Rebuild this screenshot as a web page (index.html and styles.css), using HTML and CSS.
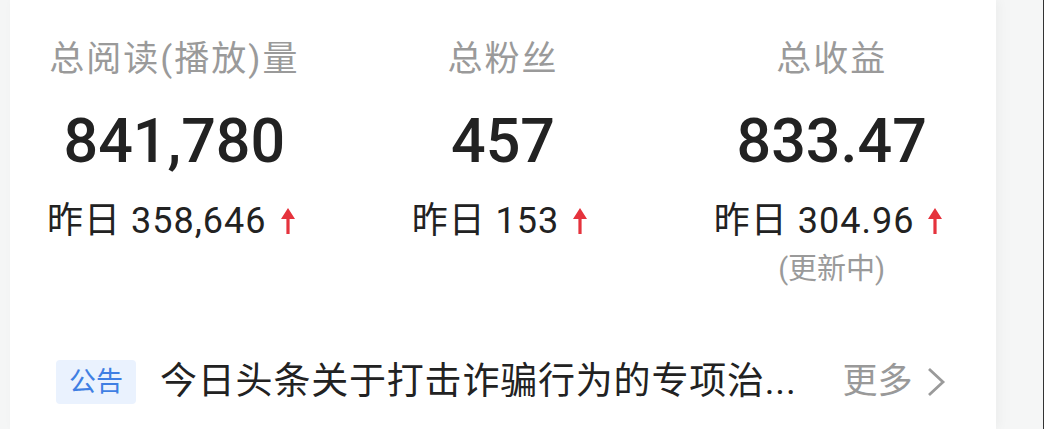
FILE: index.html
```html
<!DOCTYPE html>
<html lang="zh-CN">
<head>
<meta charset="utf-8">
<title>数据概览</title>
<link rel="stylesheet" href="styles.css">
</head>
<body>
<div class="frame">
  <div class="card">
    <div class="stats">
      <div class="stat">
        <div class="label">总阅读(播放)量</div>
        <div class="value">841,780</div>
        <div class="yday">昨日 358,646<svg class="up" viewBox="0 0 14 26"><path d="M7 0 L14 11 L8.6 11 L8.6 26 L5.4 26 L5.4 11 L0 11 Z"/></svg></div>
      </div>
      <div class="stat">
        <div class="label">总粉丝</div>
        <div class="value">457</div>
        <div class="yday">昨日 153<svg class="up" viewBox="0 0 14 26"><path d="M7 0 L14 11 L8.6 11 L8.6 26 L5.4 26 L5.4 11 L0 11 Z"/></svg></div>
      </div>
      <div class="stat">
        <div class="label">总收益</div>
        <div class="value">833.47</div>
        <div class="yday">昨日 304.96<svg class="up" viewBox="0 0 14 26"><path d="M7 0 L14 11 L8.6 11 L8.6 26 L5.4 26 L5.4 11 L0 11 Z"/></svg></div>
        <div class="note">(更新中)</div>
      </div>
    </div>
    <div class="notice">
      <span class="badge">公告</span>
      <span class="notice-text">今日头条关于打击诈骗行为的专项治...</span>
      <span class="more">更多<svg class="chev" viewBox="0 0 20 30"><path d="M3 2 L17 15 L3 28"/></svg></span>
    </div>
  </div>
</div>
</body>
</html>
```

FILE: styles.css
```css
html, body {
  margin: 0;
  padding: 0;
}
body {
  width: 1044px;
  height: 429px;
  overflow: hidden;
  background: #f5f6f6;
  font-family: "Roboto", "Noto Sans CJK SC", sans-serif;
}
.frame {
  height: 429px;
  box-sizing: border-box;
  padding-left: 10px;
  border-right: 1px solid #333;
  display: flex;
}
.card {
  width: 986px;
  height: 429px;
  background: #fff;
  box-shadow: 3px 0 10px rgba(0,0,0,0.04);
  display: flex;
  flex-direction: column;
}
.stats {
  display: grid;
  grid-template-columns: repeat(3, 1fr);
  padding-top: 38px;
}
.stat {
  display: flex;
  flex-direction: column;
  align-items: center;
}
.label {
  font-size: 35px;
  line-height: 44px;
  color: #9a9a9a;
  letter-spacing: 2px;
}
.value {
  margin-top: 24px;
  font-size: 61px;
  line-height: 70px;
  font-weight: 500;
  color: #222;
}
.yday {
  margin-top: 23px;
  font-size: 36px;
  line-height: 44px;
  letter-spacing: 1px;
  color: #222;
  display: flex;
  align-items: center;
}
.up {
  width: 14px;
  height: 26px;
  margin-left: 14px;
  margin-right: 7px;
  fill: #e5333d;
}
.note {
  margin-top: 10px;
  font-size: 29px;
  line-height: 32px;
  color: #9a9a9a;
}
.notice {
  display: flex;
  align-items: center;
  padding-left: 46px;
}
.stats + .notice {
  margin-top: 75px;
}
.badge {
  width: 80px;
  height: 44px;
  border-radius: 4px;
  background: #eaf2fe;
  color: #3f7fe3;
  font-size: 27px;
  line-height: 44px;
  text-align: center;
}
.notice-text {
  margin-left: 24px;
  font-size: 37px;
  line-height: 44px;
  letter-spacing: 0.8px;
  color: #222;
}
.more {
  margin-left: 46px;
  font-size: 35px;
  line-height: 44px;
  color: #999;
  display: flex;
  align-items: center;
}
.chev {
  width: 20px;
  height: 30px;
  margin-left: 14px;
  fill: none;
  stroke: #9a9a9a;
  stroke-width: 2.8;
}
```
